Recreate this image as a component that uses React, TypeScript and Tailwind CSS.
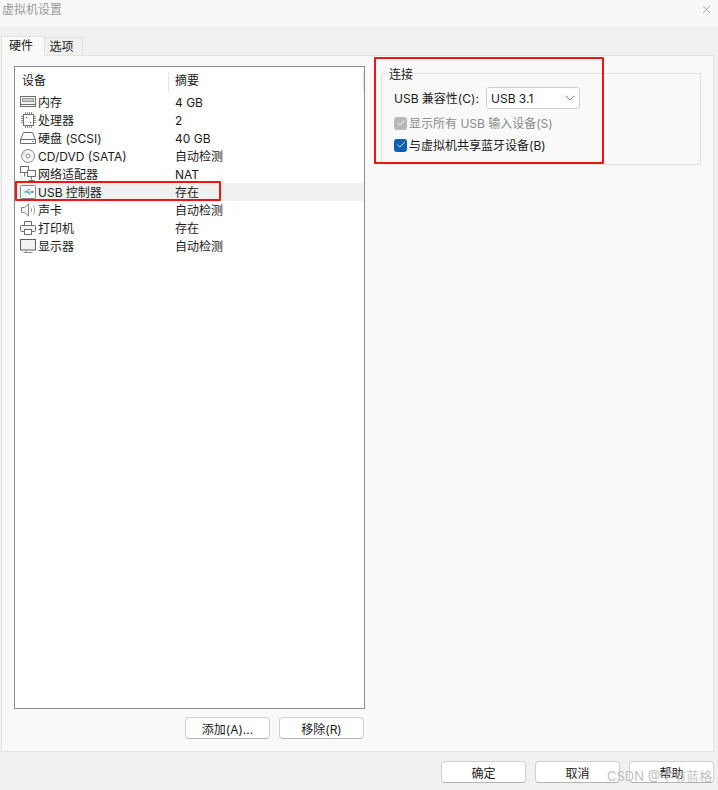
import { X, ChevronDown, Check } from 'lucide-react';
import type { ReactNode } from 'react';

const FONT = "font-['Inter','Noto_Sans_CJK_SC',sans-serif]";

const iconProps = {
  width: 18,
  height: 16,
  viewBox: '0 0 18 16',
  fill: 'none',
  stroke: '#6e6e6e',
  strokeWidth: 1,
};

const icons: Record<string, ReactNode> = {
  memory: (
    <svg {...iconProps}>
      <rect x="1.5" y="2.5" width="15" height="10" fill="#f4f4f4" />
      <rect x="3.5" y="4.5" width="11" height="3" fill="#c8c8c8" stroke="#9a9a9a" />
      <path d="M1.5 10.5h15" />
    </svg>
  ),
  cpu: (
    <svg {...iconProps}>
      <rect x="4.5" y="2.5" width="10" height="11" fill="#fff" />
      <path d="M2 4.5h2M2 6.5h2M2 8.5h2M2 10.5h2M15 4.5h2M15 6.5h2M15 8.5h2M15 10.5h2M6.5 0v2M8.5 0v2M10.5 0v2M12.5 0v2M6.5 14v2M8.5 14v2M10.5 14v2M12.5 14v2" stroke="#8f8f8f" />
      <rect x="7" y="5" width="1" height="1" fill="#555" stroke="none" />
      <rect x="11" y="10" width="1" height="1" fill="#555" stroke="none" />
    </svg>
  ),
  disk: (
    <svg {...iconProps}>
      <path d="M4.5 2.5h9l3 7v4h-15v-4z" fill="#fafafa" />
      <path d="M1.5 9.5h15" />
      <path d="M13 11.5h2" stroke="#999" />
    </svg>
  ),
  cd: (
    <svg {...iconProps}>
      <circle cx="9" cy="8" r="6.5" fill="#f4f4f4" stroke="#8a8a8a" />
      <circle cx="9" cy="8" r="2" fill="#fff" stroke="#8a8a8a" />
      <path d="M6 3.5a5.5 5.5 0 0 0-1.5 3" stroke="#b5b5b5" />
    </svg>
  ),
  network: (
    <svg {...iconProps}>
      <rect x="1.5" y="0.5" width="8" height="6" fill="#fff" />
      <rect x="8.5" y="4.5" width="8" height="6" fill="#fff" />
      <path d="M12.5 10.5v3M9.5 14.5h6M5.5 6.5v4" />
      <path d="M2 9.5v1M2 12.5v1M2 15.5h1M5 15.5h1" stroke="#a5a5a5" />
    </svg>
  ),
  usb: (
    <svg {...iconProps}>
      <rect x="1.5" y="1.5" width="15" height="13" rx="1" fill="#fbfbfb" stroke="#7d8a94" />
      <path d="M4.5 8h9M7 8l2-2.5h2M8.5 8l1.5 2h1.5" stroke="#4d8dbd" />
      <rect x="12.5" y="7" width="2" height="2" fill="#4d8dbd" stroke="none" />
    </svg>
  ),
  sound: (
    <svg {...iconProps}>
      <path d="M2.5 5.5h3l4-3.5v12l-4-3.5h-3z" fill="#f8f8f8" stroke="#858585" />
      <path d="M12 5.5c.8 1.6.8 3.4 0 5M14.5 3.5c1.4 2.8 1.4 6.2 0 9" stroke="#a0a0a0" />
    </svg>
  ),
  printer: (
    <svg {...iconProps}>
      <path d="M5.5 5.5v-4h7v4" fill="#fff" />
      <rect x="1.5" y="5.5" width="15" height="6" rx="1" fill="#f4f4f4" />
      <rect x="5.5" y="9.5" width="7" height="5" fill="#fff" />
    </svg>
  ),
  display: (
    <svg {...iconProps}>
      <rect x="1.5" y="1.5" width="15" height="10.5" fill="#f2f2f2" stroke="#5f5f5f" />
      <path d="M7 12.5v2M4.5 14.5h9" stroke="#8a8a8a" />
    </svg>
  ),
};

const devices = [
  { icon: 'memory', name: '内存', summary: '4 GB' },
  { icon: 'cpu', name: '处理器', summary: '2' },
  { icon: 'disk', name: '硬盘 (SCSI)', summary: '40 GB' },
  { icon: 'cd', name: 'CD/DVD (SATA)', summary: '自动检测' },
  { icon: 'network', name: '网络适配器', summary: 'NAT' },
  { icon: 'usb', name: 'USB 控制器', summary: '存在', selected: true },
  { icon: 'sound', name: '声卡', summary: '自动检测' },
  { icon: 'printer', name: '打印机', summary: '存在' },
  { icon: 'display', name: '显示器', summary: '自动检测' },
];

function DialogButton({ label }: { label: string }) {
  return (
    <button
      type="button"
      className="h-[22px] w-[85px] rounded-[4px] border border-[#d0d0d0] border-b-[#b4b4b4] bg-white pt-[3px] text-xs text-[#1a1a1a]"
    >
      {label}
    </button>
  );
}

function CheckRow({ label, disabled }: { label: string; disabled?: boolean }) {
  return (
    <div className="flex h-[22px] items-center gap-[2px]">
      <span
        className={`flex h-[13px] w-[13px] items-center justify-center rounded-[3px] ${
          disabled ? 'bg-[#b8b8b8]' : 'bg-[#0f5fb5]'
        }`}
      >
        <Check size={10} color="#fff" strokeWidth={2} />
      </span>
      <span className={`pt-px ${disabled ? 'text-[#8a8a8a]' : 'text-[#1a1a1a]'}`}>{label}</span>
    </div>
  );
}

export default function App() {
  return (
    <div className={`relative flex h-[790px] w-[718px] flex-col overflow-hidden bg-[#f0f0f0] text-xs leading-[18px] text-[#1a1a1a] ${FONT}`}>
      {/* title bar */}
      <div className="flex h-[26px] items-start justify-between bg-[#f8f8f8] pl-[2px] pr-[5px] pt-px">
        <span className="text-[#9a9a9a]">虚拟机设置</span>
        <X size={13} color="#666" strokeWidth={1} className="mt-[2px]" />
      </div>

      {/* tabs */}
      <div className="relative z-10 -mb-px flex h-[30px] items-end pl-px">
        <div className="flex h-[20px] w-[44px] items-center justify-center border border-b-0 border-[#e3e3e3] bg-[#f9f9f9] pb-[2px] pr-[4px]">硬件</div>
        <div className="flex h-[19px] w-[38px] items-center justify-center border border-b-[#e3e3e3] border-l-0 border-[#e3e3e3] bg-[#f0f0f0] pr-[4px] pt-px">选项</div>
      </div>

      {/* page */}
      <div className="mx-px flex h-[697px] w-[713px] border border-[#e3e3e3] bg-[#f9f9f9] pl-[12px] pt-[10px]">
        <div className="flex w-[351px] flex-col">
          <div className="flex h-[643px] flex-col border border-[#8a8d94] bg-white">
            <div className="flex h-[26px] shrink-0 pt-[5px]">
              <span className="h-[20px] w-[154px] border-r border-[#e5e5e5] pl-[7px]">设备</span>
              <span className="pl-[6px]">摘要</span>
              <span className="ml-auto h-[20px] border-r border-[#e5e5e5]" />
            </div>
            {devices.map((row) => (
              <div
                key={row.name}
                className={`flex h-[18px] items-center ${row.selected ? 'bg-[#f0f0f0]' : ''}`}
              >
                <span className="flex w-[160px] items-center pl-[4px]">
                  <span className="flex w-[18px] shrink-0 justify-center">{icons[row.icon]}</span>
                  <span className="pl-[1px] pt-px">{row.name}</span>
                </span>
                <span className="pt-px">{row.summary}</span>
              </div>
            ))}
          </div>
          <div className="mt-[8px] flex justify-end gap-[9px] pr-px">
            <DialogButton label="添加(A)..." />
            <DialogButton label="移除(R)" />
          </div>
        </div>

        {/* connection group */}
        <div className="relative ml-[16px] mt-[7px] h-[92px] w-[320px] rounded-[1px] border border-[#dedede] px-[12px] pt-[13px]">
          <span className="absolute -top-[8px] left-[6px] bg-[#f9f9f9] px-px">连接</span>
          <div className="flex h-[22px] items-center">
            <span className="w-[92px] pt-px">USB 兼容性(C):</span>
            <div className="flex h-[22px] w-[94px] items-center justify-between rounded-[3px] border border-[#cfcfcf] bg-white pl-[4px] pr-[1px]">
              <span className="pt-px">USB 3.1</span>
              <ChevronDown size={16} color="#444" strokeWidth={1} />
            </div>
          </div>
          <div className="mt-[3px]">
            <CheckRow label="显示所有 USB 输入设备(S)" disabled />
            <CheckRow label="与虚拟机共享蓝牙设备(B)" />
          </div>
        </div>
      </div>

      {/* footer */}
      <div className="mt-[9px] flex justify-end gap-[9px] pr-[4px]">
        <DialogButton label="确定" />
        <DialogButton label="取消" />
        <DialogButton label="帮助" />
      </div>

      {/* red annotation frames */}
      <div className="pointer-events-none absolute left-[15px] top-[181px] h-[20px] w-[206px] rounded-[1px] border-2 border-[#f01414]" />
      <div className="pointer-events-none absolute left-[374px] top-[57px] h-[107px] w-[230px] rounded-[1px] border-2 border-[#f01414]" />

      {/* watermark */}
      <span className="pointer-events-none absolute left-[607px] top-[767px] text-[13px] text-[#b0b0b0]/80">CSDN @宇节蓝格</span>
    </div>
  );
}
